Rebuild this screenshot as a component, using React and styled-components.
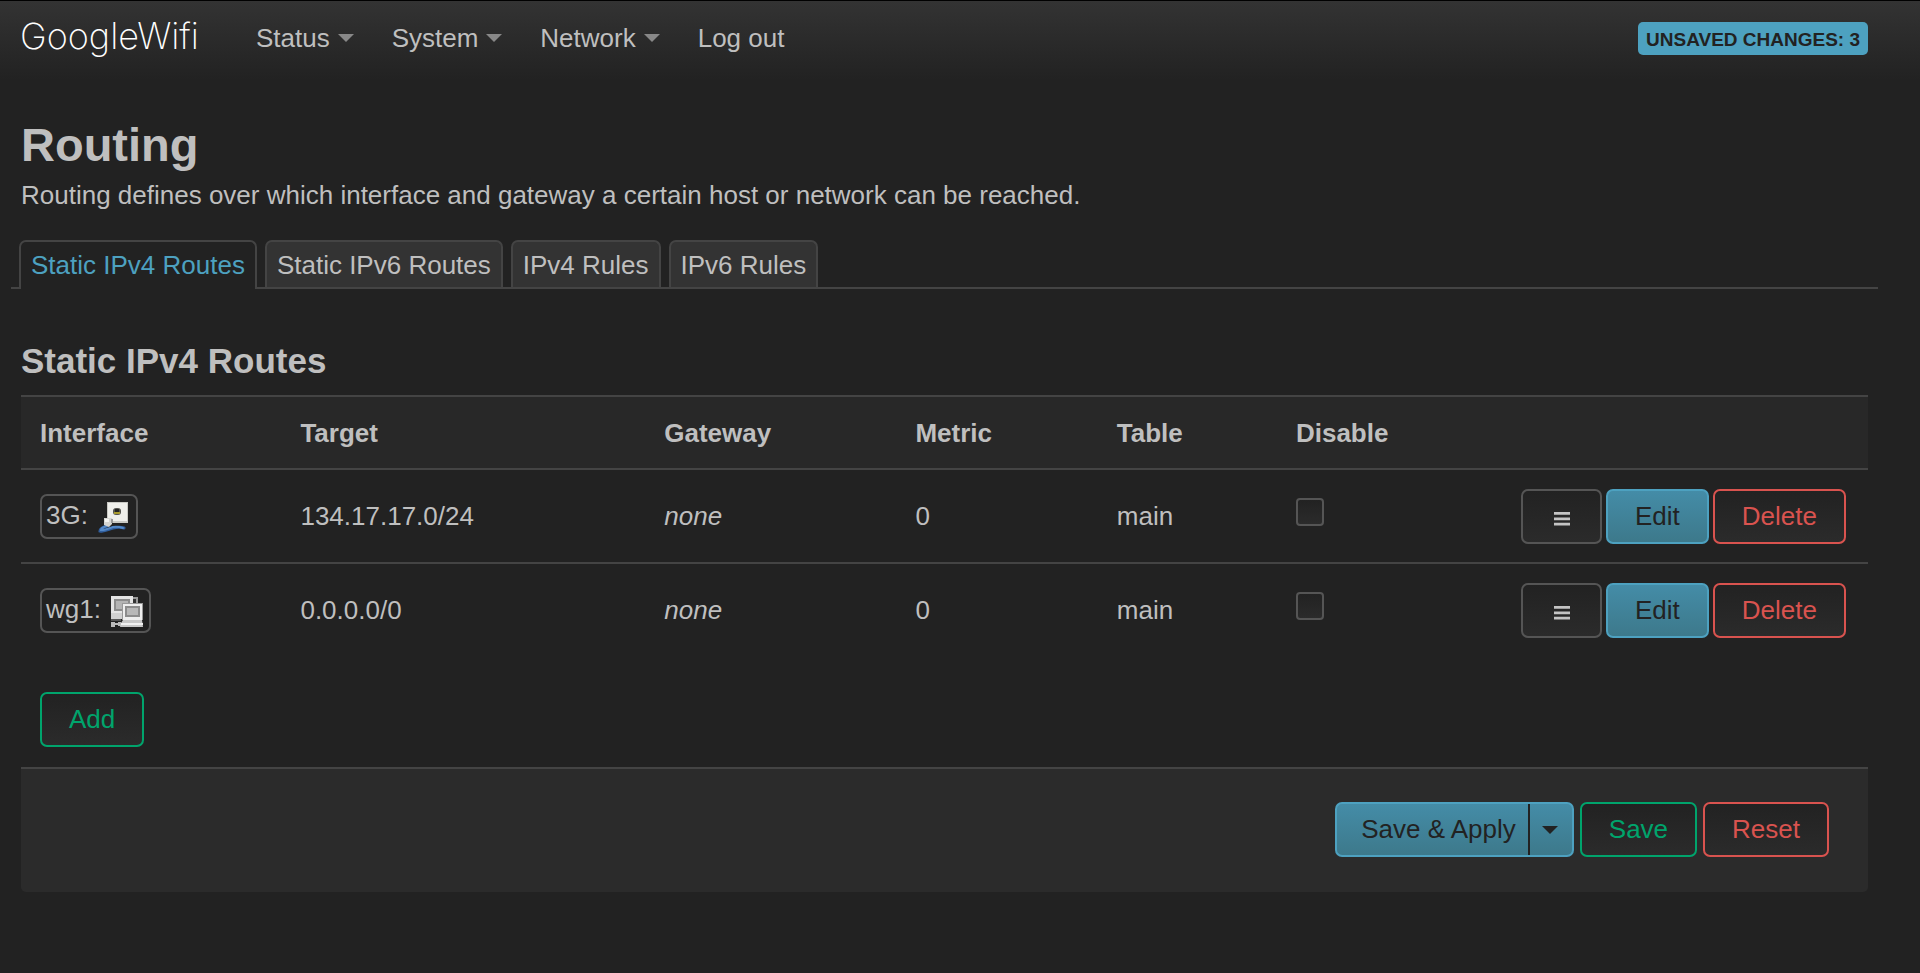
import React from "react";
import styled, { createGlobalStyle, css } from "styled-components";

const GlobalStyle = createGlobalStyle`
  *, *::before, *::after { box-sizing: border-box; }
  body {
    margin: 0;
    background: #222;
    color: #bfbfbf;
    font: 26px/36px "Liberation Sans", Arial, sans-serif;
  }
  a { color: inherit; text-decoration: none; }
`;

const Header = styled.header`
  display: flex;
  align-items: flex-start;
  height: 80px;
  padding: 0 52px 0 20px;
  border-top: 1px solid #000;
  background: linear-gradient(#333, #222);
`;

const Brand = styled.a`
  margin-right: 57px;
  color: #fff;
  font: 200 36px/70px Inter, sans-serif;
`;

const Nav = styled.nav`
  display: flex;
  gap: 38px;
  line-height: 74px;
`;

const NavLink = styled.a`
  display: flex;
  align-items: center;
  gap: 8px;
`;

const Caret = styled.span`
  border-top: 8px solid ${(p) => p.$color || "#888"};
  border-left: 8px solid transparent;
  border-right: 8px solid transparent;
`;

const Indicator = styled.a`
  margin: 21px 0 0 auto;
  padding: 3px 8px 0;
  border-radius: 5px;
  background: #4da1c0;
  color: #222;
  font-size: 19px;
  font-weight: bold;
  line-height: 30px;
  text-transform: uppercase;
  white-space: nowrap;
`;

const Main = styled.main`
  padding: 38px 52px 80px 21px;
`;

const Title = styled.h1`
  margin: 0 0 5px;
  font-size: 47px;
  line-height: 54px;
`;

const Description = styled.p`
  margin: 0 0 27px;
`;

const Tabs = styled.nav`
  display: flex;
  gap: 8px;
  margin: 0 -10px 50px;
  padding-left: 8px;
  border-bottom: 2px solid #444;
`;

const Tab = styled.a`
  padding: 1px 10px 0;
  border: 2px solid #444;
  border-bottom: 0;
  border-radius: 7px 7px 0 0;
  background: #333;
  line-height: 44px;
  ${(p) =>
    p.$active &&
    css`
      margin-bottom: -2px;
      padding-bottom: 2px;
      background: #222;
      color: #4da1c0;
    `}
`;

const SectionTitle = styled.h2`
  margin: 0 0 12px;
  font-size: 35px;
  line-height: 44px;
`;

const Table = styled.table`
  width: 100%;
  border-spacing: 0;
  table-layout: fixed;
  border-top: 2px solid #444;
`;

const HeadCell = styled.th`
  width: ${(p) => p.$width || "auto"};
  padding: 1px 19px 0;
  background: #282828;
  line-height: 70px;
  text-align: left;
`;

const Cell = styled.td`
  padding: 18px 19px 19px;
  border-top: 2px solid #444;
  vertical-align: middle;
`;

const ControlCell = styled(Cell)`
  padding: 19px 19px 18px;
`;

const InterfaceBadge = styled.span`
  display: inline-flex;
  align-items: center;
  gap: 10px;
  height: 45px;
  padding: 0 6px 0 4px;
  border: 2px solid #555;
  border-radius: 7px;
  vertical-align: middle;
`;

const InterfaceName = styled.span`
  padding-bottom: 3px;
`;

const Checkbox = styled.input`
  appearance: none;
  display: block;
  width: 28px;
  height: 28px;
  margin: 0 0 7px;
  border: 2px solid #555;
  border-radius: 4px;
  background: linear-gradient(#222, #2b2b2b);
`;

const tones = {
  neutral: css`
    border-color: #555;
    color: #bfbfbf;
  `,
  danger: css`
    border-color: #d9534f;
    color: #d9534f;
  `,
  positive: css`
    border-color: #00a46c;
    color: #00a46c;
  `,
  action: css`
    border-color: #4da1c0;
    background: linear-gradient(#448ca7, #3d798b);
    color: #222;
  `,
};

const Button = styled.button`
  height: 55px;
  padding: 0 27px 2px;
  border: 2px solid;
  border-radius: 7px;
  background: linear-gradient(#222, #2b2b2b);
  font: inherit;
  cursor: pointer;
  ${(p) => tones[p.$tone]}
`;

const DragButton = styled(Button)`
  display: flex;
  align-items: center;
  justify-content: center;
  width: 81px;
  padding: 4px 0 0;
`;

const RowActions = styled.div`
  display: flex;
  justify-content: flex-end;
  gap: 4px;
  margin-right: 3px;
`;

const AddRow = styled.div`
  padding: 36px 19px 20px;
`;

const PageActions = styled.footer`
  display: flex;
  justify-content: flex-end;
  gap: 6px;
  padding: 33px 39px 35px;
  border-top: 2px solid #444;
  border-radius: 0 0 5px 5px;
  background: #2b2b2b;
`;

const SplitButton = styled.div`
  display: flex;
`;

const SplitMain = styled(Button)`
  padding: 0 12px 2px 24px;
  border-right: 0;
  border-radius: 7px 0 0 7px;
`;

const SplitToggle = styled(Button)`
  display: flex;
  align-items: center;
  padding: 0 14px 0 12px;
  border-left: 0;
  border-radius: 0 7px 7px 0;
`;

const SplitDivider = styled.span`
  width: 2px;
  border: solid #4da1c0;
  border-width: 2px 0;
  background: #222;
`;

const DragIcon = () => (
  <svg width="16" height="14" viewBox="0 0 16 14" fill="#c4c4c4" aria-hidden="true">
    <path d="M0 0h16v2.8H0zM0 5.4h16v2.8H0zM0 10.8h16v2.8H0z" />
  </svg>
);

const EthernetIcon = () => (
  <svg width="32" height="32" viewBox="0 0 32 32" aria-hidden="true">
    <path d="M9 25C5 26 2 28 2 30c4 1 7-1 13-3 5-1 8-1 11 0" fill="none" stroke="#315f9e" strokeWidth="3" strokeLinecap="round" />
    <path d="M9 25C5 26 3 28 3 29c4 0 7-1 12-3 4-1 7 0 10 1" fill="none" stroke="#5489c8" strokeWidth="2" strokeLinecap="round" />
    <rect x="9" y="1" width="21" height="21" fill="#c9c9c4" />
    <rect x="10" y="2" width="19" height="18" fill="#efefeb" />
    <rect x="15" y="7" width="8" height="7" rx="3" fill="#55554f" />
    <rect x="17" y="8" width="4" height="3" fill="#222" />
    <rect x="16" y="11" width="6" height="2" fill="#a89a2c" />
    <path d="M6 17h8v6l-3 3-5-2z" fill="#d6d6d2" />
    <path d="M7 18h4v3H7z" fill="#f4f4f1" />
    <path d="M13 18h2v4h-2z" fill="#999" />
  </svg>
);

const TunnelIcon = () => (
  <svg width="32" height="32" viewBox="0 0 32 32" aria-hidden="true">
    <rect x="20" y="3" width="6" height="8" fill="#333" stroke="#999" strokeWidth="2" />
    <rect x="0" y="1" width="22" height="18" fill="#e4e4e4" />
    <rect x="4" y="5" width="14" height="10" fill="#b4b4b4" stroke="#8c8c8c" strokeWidth="2" />
    <rect x="0" y="18" width="11" height="6" fill="#d0d0d0" />
    <rect x="0" y="24" width="10" height="2" fill="#555" />
    <path d="M0 27h4v1h3v-1h3v4H7v-1H4v2H0z" fill="#bbb" />
    <rect x="11" y="8" width="21" height="17" fill="#999" />
    <rect x="12" y="9" width="19" height="16" fill="#eee" />
    <rect x="15" y="12" width="13" height="9" fill="#b8b8b8" stroke="#8c8c8c" strokeWidth="2" />
    <path d="M12 25h19l1 7H9l1-4z" fill="#c8c8c8" />
    <path d="M10 28h22v2H10z" fill="#f1f1f1" />
  </svg>
);

const menu = [
  { label: "Status", dropdown: true },
  { label: "System", dropdown: true },
  { label: "Network", dropdown: true },
  { label: "Log out" },
];

const tabs = ["Static IPv4 Routes", "Static IPv6 Routes", "IPv4 Rules", "IPv6 Rules"];

const columns = [
  { label: "Interface", width: "14.1%" },
  { label: "Target", width: "19.7%" },
  { label: "Gateway", width: "13.6%" },
  { label: "Metric", width: "10.9%" },
  { label: "Table", width: "9.7%" },
  { label: "Disable" },
];

const routes = [
  { name: "3G", Icon: EthernetIcon, target: "134.17.17.0/24", metric: 0, table: "main" },
  { name: "wg1", Icon: TunnelIcon, target: "0.0.0.0/0", metric: 0, table: "main" },
];

function RouteRow({ route }) {
  const { name, Icon, target, metric, table } = route;
  return (
    <tr>
      <ControlCell>
        <InterfaceBadge>
          <InterfaceName>{name}:</InterfaceName>
          <Icon />
        </InterfaceBadge>
      </ControlCell>
      <Cell>{target}</Cell>
      <Cell>
        <em>none</em>
      </Cell>
      <Cell>{metric}</Cell>
      <Cell>{table}</Cell>
      <Cell>
        <Checkbox type="checkbox" aria-label={`Disable ${name}`} />
      </Cell>
      <ControlCell>
        <RowActions>
          <DragButton type="button" $tone="neutral" aria-label="Drag to reorder">
            <DragIcon />
          </DragButton>
          <Button type="button" $tone="action">Edit</Button>
          <Button type="button" $tone="danger">Delete</Button>
        </RowActions>
      </ControlCell>
    </tr>
  );
}

export default function App() {
  return (
    <>
      <GlobalStyle />
      <Header>
        <Brand href="#">GoogleWifi</Brand>
        <Nav>
          {menu.map(({ label, dropdown }) => (
            <NavLink key={label} href="#">
              {label}
              {dropdown && <Caret />}
            </NavLink>
          ))}
        </Nav>
        <Indicator href="#">Unsaved Changes: 3</Indicator>
      </Header>
      <Main>
        <Title>Routing</Title>
        <Description>
          Routing defines over which interface and gateway a certain host or network can be reached.
        </Description>
        <Tabs>
          {tabs.map((label, i) => (
            <Tab key={label} href="#" $active={i === 0}>{label}</Tab>
          ))}
        </Tabs>
        <SectionTitle>Static IPv4 Routes</SectionTitle>
        <Table>
          <thead>
            <tr>
              {columns.map(({ label, width }) => (
                <HeadCell key={label} scope="col" $width={width}>{label}</HeadCell>
              ))}
              <HeadCell as="td" $width="22%" />
            </tr>
          </thead>
          <tbody>
            {routes.map((route) => (
              <RouteRow key={route.name} route={route} />
            ))}
          </tbody>
        </Table>
        <AddRow>
          <Button type="button" $tone="positive">Add</Button>
        </AddRow>
        <PageActions>
          <SplitButton>
            <SplitMain type="button" $tone="action">Save &amp; Apply</SplitMain>
            <SplitDivider />
            <SplitToggle type="button" $tone="action" aria-label="More apply options">
              <Caret $color="#222" />
            </SplitToggle>
          </SplitButton>
          <Button type="button" $tone="positive">Save</Button>
          <Button type="button" $tone="danger">Reset</Button>
        </PageActions>
      </Main>
    </>
  );
}
